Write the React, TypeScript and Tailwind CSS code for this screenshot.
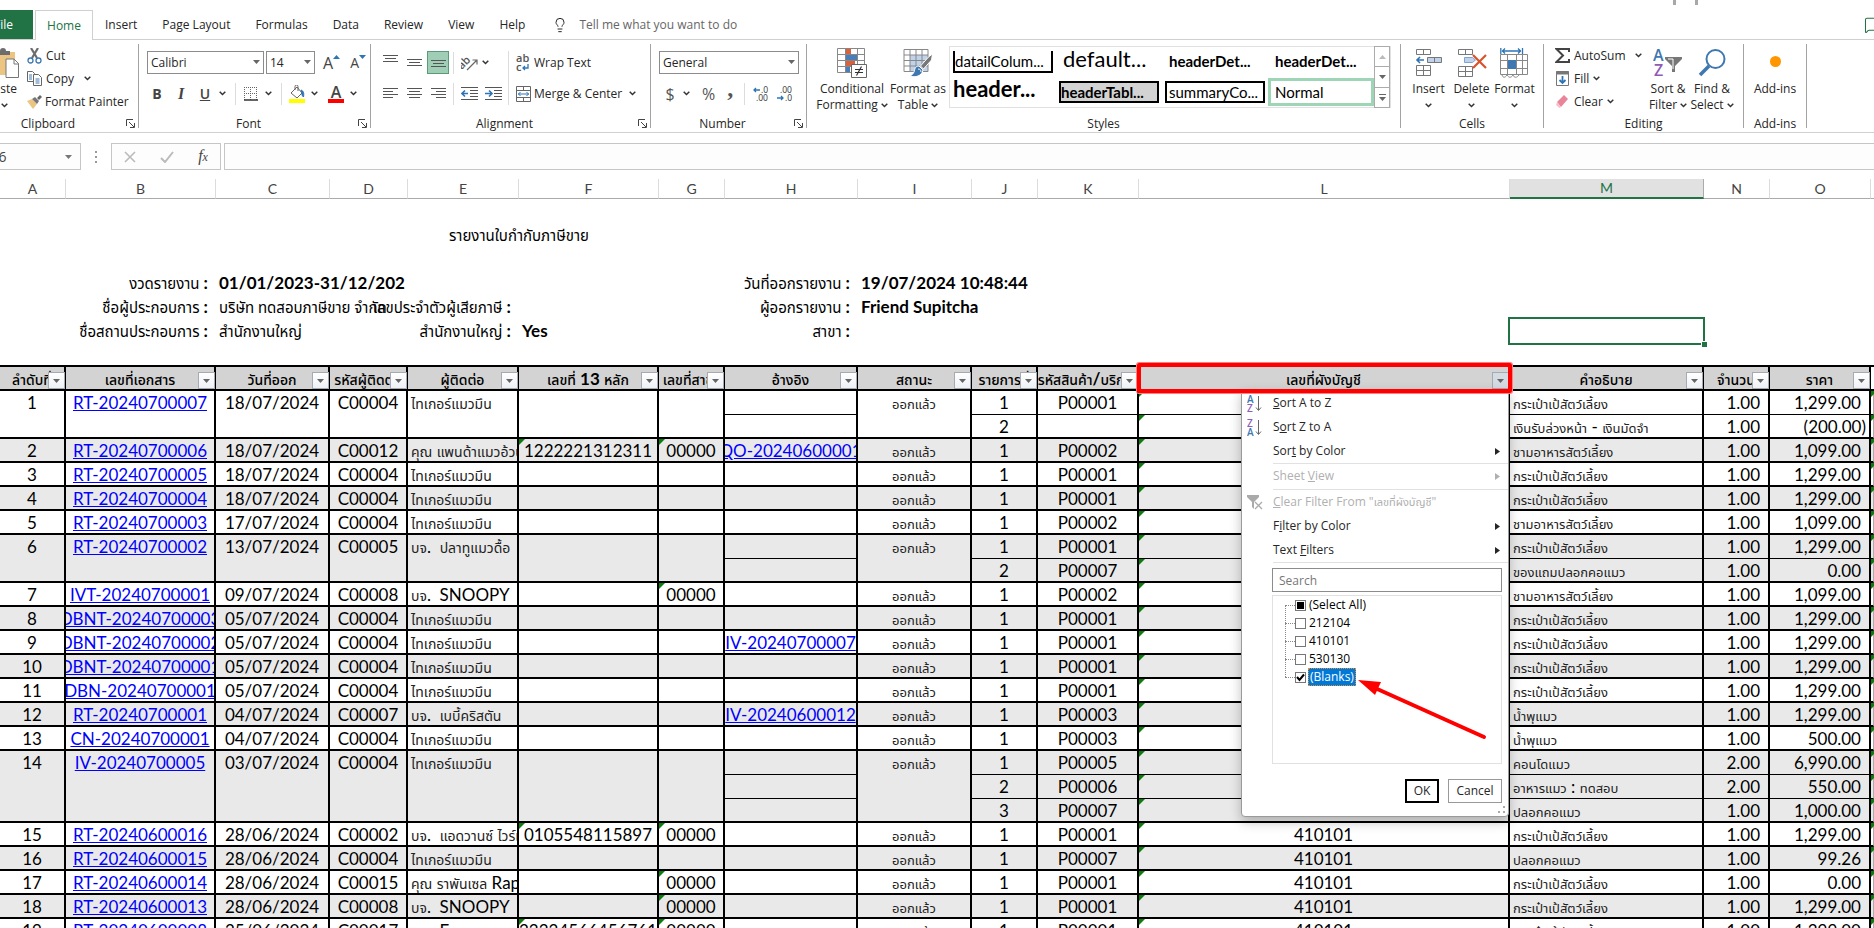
import type { ReactNode } from "react";
import { Lightbulb, MessageSquare } from "lucide-react";
import clsx from "clsx";

type Line = [no: string, product: string, account: string, name: string, qty: string, price: string];

type Doc = {
  no: string;
  doc: string;
  date: string;
  contact: string;
  customer: string;
  taxId?: string;
  branch?: string;
  ref?: string;
  lines: Line[];
};

const BAG = "กระเป๋าเป้สัตว์เลี้ยง";
const BOWL = "ชามอาหารสัตว์เลี้ยง";
const TIGER = "ไทเกอร์แมวมึน";

const docs: Doc[] = [
  {
    no: "1", doc: "RT-20240700007", date: "18/07/2024", contact: "C00004", customer: TIGER,
    lines: [
      ["1", "P00001", "", BAG, "1.00", "1,299.00"],
      ["2", "", "", "เงินรับล่วงหน้า - เงินมัดจำ", "1.00", "(200.00)"],
    ],
  },
  {
    no: "2", doc: "RT-20240700006", date: "18/07/2024", contact: "C00012", customer: "คุณ แพนด้าแมวอ้วน",
    taxId: "1222221312311", branch: "00000", ref: "QO-20240600001",
    lines: [["1", "P00002", "", BOWL, "1.00", "1,099.00"]],
  },
  { no: "3", doc: "RT-20240700005", date: "18/07/2024", contact: "C00004", customer: TIGER, lines: [["1", "P00001", "", BAG, "1.00", "1,299.00"]] },
  { no: "4", doc: "RT-20240700004", date: "18/07/2024", contact: "C00004", customer: TIGER, lines: [["1", "P00001", "", BAG, "1.00", "1,299.00"]] },
  { no: "5", doc: "RT-20240700003", date: "17/07/2024", contact: "C00004", customer: TIGER, lines: [["1", "P00002", "", BOWL, "1.00", "1,099.00"]] },
  {
    no: "6", doc: "RT-20240700002", date: "13/07/2024", contact: "C00005", customer: "บจ.  ปลาทูแมวดื้อ",
    lines: [
      ["1", "P00001", "", BAG, "1.00", "1,299.00"],
      ["2", "P00007", "", "ของแถมปลอกคอแมว", "1.00", "0.00"],
    ],
  },
  { no: "7", doc: "IVT-20240700001", date: "09/07/2024", contact: "C00008", customer: "บจ.  SNOOPY", branch: "00000", lines: [["1", "P00002", "", BOWL, "1.00", "1,099.00"]] },
  { no: "8", doc: "DBNT-20240700003", date: "05/07/2024", contact: "C00004", customer: TIGER, lines: [["1", "P00001", "", BAG, "1.00", "1,299.00"]] },
  { no: "9", doc: "DBNT-20240700002", date: "05/07/2024", contact: "C00004", customer: TIGER, ref: "IV-20240700007", lines: [["1", "P00001", "", BAG, "1.00", "1,299.00"]] },
  { no: "10", doc: "DBNT-20240700001", date: "05/07/2024", contact: "C00004", customer: TIGER, lines: [["1", "P00001", "", BAG, "1.00", "1,299.00"]] },
  { no: "11", doc: "DBN-20240700001", date: "05/07/2024", contact: "C00004", customer: TIGER, lines: [["1", "P00001", "", BAG, "1.00", "1,299.00"]] },
  { no: "12", doc: "RT-20240700001", date: "04/07/2024", contact: "C00007", customer: "บจ.  เบบี้คริสตัน", ref: "IV-20240600012", lines: [["1", "P00003", "", "น้ำพุแมว", "1.00", "1,299.00"]] },
  { no: "13", doc: "CN-20240700001", date: "04/07/2024", contact: "C00004", customer: TIGER, lines: [["1", "P00003", "", "น้ำพุแมว", "1.00", "500.00"]] },
  {
    no: "14", doc: "IV-20240700005", date: "03/07/2024", contact: "C00004", customer: TIGER,
    lines: [
      ["1", "P00005", "", "คอนโดแมว", "2.00", "6,990.00"],
      ["2", "P00006", "", "อาหารแมว : ทดสอบ", "2.00", "550.00"],
      ["3", "P00007", "", "ปลอกคอแมว", "1.00", "1,000.00"],
    ],
  },
  { no: "15", doc: "RT-20240600016", date: "28/06/2024", contact: "C00002", customer: "บจ.  แอดวานซ์ ไวร์เลส", taxId: "0105548115897", branch: "00000", lines: [["1", "P00001", "410101", BAG, "1.00", "1,299.00"]] },
  { no: "16", doc: "RT-20240600015", date: "28/06/2024", contact: "C00004", customer: TIGER, lines: [["1", "P00007", "410101", "ปลอกคอแมว", "1.00", "99.26"]] },
  { no: "17", doc: "RT-20240600014", date: "28/06/2024", contact: "C00015", customer: "คุณ ราพันเซล Rapunzel", branch: "00000", lines: [["1", "P00001", "410101", BAG, "1.00", "0.00"]] },
  { no: "18", doc: "RT-20240600013", date: "28/06/2024", contact: "C00008", customer: "บจ.  SNOOPY", branch: "00000", lines: [["1", "P00001", "410101", BAG, "1.00", "1,299.00"]] },
  { no: "19", doc: "RT-20240600008", date: "25/06/2024", contact: "C00017", customer: "บจ.  Few", taxId: "22224566456761", branch: "00000", lines: [["1", "P00001", "410101", BAG, "1.00", "1,299.00"]] },
];

const columns = [
  { letter: "A", title: "ลำดับที่", width: "w-[66px]" },
  { letter: "B", title: "เลขที่เอกสาร", width: "w-[150px]" },
  { letter: "C", title: "วันที่ออก", width: "w-[114px]" },
  { letter: "D", title: "รหัสผู้ติดต่อ", width: "w-[78px]" },
  { letter: "E", title: "ผู้ติดต่อ", width: "w-[111px]" },
  { letter: "F", title: "เลขที่ 13 หลัก", width: "w-[140px]" },
  { letter: "G", title: "เลขที่สาขา", width: "w-[66px]" },
  { letter: "H", title: "อ้างอิง", width: "w-[133px]" },
  { letter: "I", title: "สถานะ", width: "w-[114px]" },
  { letter: "J", title: "รายการที่", width: "w-[66px]" },
  { letter: "K", title: "รหัสสินค้า/บริการ", width: "w-[101px]" },
  { letter: "L", title: "เลขที่ผังบัญชี", width: "w-[371px]" },
  { letter: "M", title: "คำอธิบาย", width: "w-[194px]" },
  { letter: "N", title: "จำนวน", width: "w-[66px]" },
  { letter: "O", title: "ราคา", width: "w-[101px]" },
];

// Thai glyphs run larger than Latin ones at the same size, so they get their own size.
const mixed = (text: string, thaiClass: string) => (
  <span>
    {text.split(/([\u0E00-\u0E7F]+)/).map((part, i) =>
      i % 2 === 1 ? <span key={i} className={thaiClass}>{part}</span> : part,
    )}
  </span>
);

const Chevron = () => (
  <svg className="h-[5px] w-[7px] shrink-0" viewBox="0 0 7 5" fill="none" stroke="#333" strokeWidth="1.5">
    <path d="M.7.8 3.500 3.500 6.300.8" />
  </svg>
);

const Triangle = ({ className = "" }: { className?: string }) => (
  <svg className={clsx("h-1 w-[7px] shrink-0", className)} viewBox="0 0 7 4" fill="currentColor">
    <path d="M0 0h7L3.5 4z" />
  </svg>
);

const Divider = ({ className = "h-[22px]" }: { className?: string }) => (
  <span className={clsx("w-px shrink-0 bg-[#dcdcdc]", className)} />
);

const Group = ({ label, width, launcher, labelClass, children }: { label: string; width: string; launcher?: boolean; labelClass?: string; children: ReactNode }) => (
  <section className={clsx("flex h-[84px] shrink-0 flex-col border-r border-[#a3a3a3]", width)}>
    <div className="h-[75px]">{children}</div>
    <div className="flex h-[9px] items-center">
      <span className={clsx("flex-1 text-center leading-4", labelClass)}>{label}</span>
      {launcher && (
        <button aria-label={`${label} settings`} className="mr-[3px] w-[9px]">
          <svg viewBox="0 0 9 9" className="h-[9px] w-[9px]" fill="none" stroke="#444">
            <path d="M.5 7V.5H7M3 3l5 5M8.500 4v4.500H4" />
          </svg>
        </button>
      )}
    </div>
  </section>
);

const BigButton = ({ icon, lines, width, chevronBelow, plain }: { icon: ReactNode; lines: string[]; width: string; chevronBelow?: boolean; plain?: boolean }) => (
  <button className={clsx("flex h-[72px] shrink-0 flex-col items-center whitespace-nowrap pt-1 leading-4", width)}>
    <span className="mb-[3px] flex h-[30px] items-center">{icon}</span>
    {lines.map((line, i) => (
      <span key={line} className="flex items-center gap-[3px]">
        {line}
        {!plain && !chevronBelow && i === lines.length - 1 && <Chevron />}
      </span>
    ))}
    {chevronBelow && <span className="flex h-4 items-center"><Chevron /></span>}
  </button>
);

const Combo = ({ label, value, width }: { label: string; value: string; width: string }) => (
  <span className={clsx("relative block h-[23px] shrink-0", width)}>
    <select aria-label={label} defaultValue={value} className="h-full w-full appearance-none border border-[#8c8c8c] bg-white pl-[3px] text-[#262626] outline-none">
      <option>{value}</option>
    </select>
    <Triangle className="pointer-events-none absolute right-1 top-[9px] text-[#666]" />
  </span>
);

const AlignLines = ({ rows }: { rows: [number, number][] }) => (
  <svg className="h-[14px] w-[15px]" viewBox="0 0 15 14" stroke="#555">
    {rows.map(([x, w], i) => (
      <path key={i} d={`M${x} ${i * 3 + 1.5}h${w}`} />
    ))}
  </svg>
);

const IndentIcon = ({ right }: { right?: boolean }) => (
  <svg className="h-[14px] w-[17px]" viewBox="0 0 17 14" fill="none" stroke="#555">
    <path d="M0 .5h17M9 3.500h8M9 6.500h8M9 9.500h8M0 12.500h17" />
    <path d={right ? "M0 6.500h6M4 3.500l3 3-3 3" : "M7 6.500H1M4 3.500l-3 3 3 3"} stroke="#2e75b6" strokeWidth="1.6" />
  </svg>
);

const DecimalIcon = ({ less }: { less?: boolean }) => (
  <svg className="h-4 w-[16px]" viewBox="0 0 16 16" fontSize="8.500" fill="#333">
    <text x={less ? 3 : 8} y="7">{less ? ".00" : ".0"}</text>
    <text x={less ? 8 : 3} y="15">{less ? ".0" : ".00"}</text>
    <path d={less ? "M0 12h6M4 10l2 2-2 2" : "M7 4H1M3 2 1 4l2 2"} fill="none" stroke="#2e75b6" strokeWidth="1.300" />
  </svg>
);

const tabs = ["Insert", "Page Layout", "Formulas", "Data", "Review", "View", "Help"];

const TabBar = () => (
  <nav className="flex h-[30px] items-stretch border-b border-[#d0d0d0] text-[#262626]">
    <button className="flex w-[33px] shrink-0 items-center justify-end overflow-hidden bg-[#217346] pr-5 text-white">File</button>
    <button className="-mb-px ml-[2px] w-[58px] border border-b-0 border-[#d0d0d0] bg-white text-[#217346]">Home</button>
    <div className="flex items-center gap-[25px] pl-3">
      {tabs.map((tab) => (
        <button key={tab} className="whitespace-nowrap">{tab}</button>
      ))}
    </div>
    <label className="ml-[27px] flex items-center gap-[11px]">
      <Lightbulb className="h-4 w-4" strokeWidth={1.5} />
      <input aria-label="Tell me what you want to do" placeholder="Tell me what you want to do" className="w-48 outline-none placeholder:text-[#666]" />
    </label>
    <button aria-label="Comments" className="-mr-2 ml-auto text-[#217346]">
      <MessageSquare className="h-[18px] w-[18px]" strokeWidth={1.4} />
    </button>
  </nav>
);

const ClipboardGroup = () => (
  <Group label="Clipboard" width="w-[139px]" labelClass="pr-[30px]" launcher>
    <div className="flex">
      <button className="flex h-[72px] w-[25px] shrink-0 flex-col items-end overflow-hidden pr-[6px] pt-1 leading-4">
        <svg className="mb-[3px] h-[30px] w-[30px] shrink-0" viewBox="0 0 30 30">
          <path d="M1 4h25v23H1z" fill="#ecc582" />
          <path d="M7 7V3h4a3 3 0 0 1 6 0h4v4z" fill="#6d6d6d" />
          <path d="M17 11h8l4.500 4.500V29.500H17z" fill="#fff" stroke="#777" />
          <path d="M25 11v5h5" fill="none" stroke="#777" />
        </svg>
        <span className="pr-[2px]">Paste</span>
        <span className="flex h-4 w-[18px] items-center"><Chevron /></span>
      </button>
      <div className="flex flex-col pl-[2px] text-[#262626]">
        <button className="flex h-[23px] items-center gap-[4px]">
          <svg className="h-4 w-[15px]" viewBox="0 0 15 16" fill="none">
            <path d="M4 0l6 10M11 0 5 10" stroke="#6d6d6d" strokeWidth="2.200" />
            <circle cx="3.500" cy="12.500" r="2.500" stroke="#3f78b0" strokeWidth="1.300" />
            <circle cx="11.500" cy="12.500" r="2.500" stroke="#3f78b0" strokeWidth="1.300" />
          </svg>
          Cut
        </button>
        <button className="flex h-[23px] items-center gap-[4px]">
          <svg className="h-[15px] w-[15px]" viewBox="0 0 15 15" fill="#fff" stroke="#666">
            <path d="M.5.5h5l2 2v8h-7z" />
            <path d="M6.500 3.500h5l3 3v8h-8z" />
            <path d="M2 4h3M2 6h3M2 8h3M8.500 8h4M8.500 10h4M8.500 12h4" stroke="#3f78b0" />
          </svg>
          Copy
          <span className="ml-[6px]"><Chevron /></span>
        </button>
        <button className="flex h-[23px] items-center gap-[3px] whitespace-nowrap">
          <svg className="h-[14px] w-[15px]" viewBox="0 0 15 14">
            <path d="M0 6l5-2 5 5-4 5z" fill="#ecc582" />
            <path d="M5 4l3-2 4 4-2 3z" fill="#777" />
            <path d="M10 3l3-3 2 2-3 3z" fill="#666" />
          </svg>
          Format Painter
        </button>
      </div>
    </div>
  </Group>
);

const FontGroup = () => (
  <Group label="Font" width="w-[232px]" launcher>
    <div className="flex flex-col gap-2 pl-2 pt-[7px] text-[#444]">
      <div className="flex h-[23px] items-center gap-[2px]">
        <Combo label="Font" value="Calibri" width="w-[117px]" />
        <Combo label="Font size" value="14" width="w-[49px]" />
        <button aria-label="Increase font size" className="ml-[6px] flex text-base">
          A<Triangle className="mt-1 w-[5px] rotate-180 text-[#2e75b6]" />
        </button>
        <button aria-label="Decrease font size" className="ml-2 flex text-sm">
          A<Triangle className="mt-[2px] w-[5px] text-[#2e75b6]" />
        </button>
      </div>
      <div className="flex h-[23px] items-center pl-[4px]">
        <button className="w-[12px] text-sm font-bold">B</button>
        <button className="ml-3 w-[12px] font-['Liberation_Serif',serif] text-base font-bold italic">I</button>
        <button className="ml-3 w-[12px] text-sm font-semibold underline">U</button>
        <button aria-label="Underline styles" className="ml-2"><Chevron /></button>
        <Divider className="ml-[9px] h-[22px]" />
        <button aria-label="Borders" className="ml-2">
          <svg className="h-[14px] w-[14px]" viewBox="0 0 14 14" fill="none" stroke="#666">
            <path d="M.5 0v13M6.500 0v13M12.500 0v13M0 .5h13M0 6.500h13" strokeDasharray="1 1" />
            <path d="M0 13h14" stroke="#333" strokeWidth="1.500" />
          </svg>
        </button>
        <button aria-label="Border styles" className="ml-[7px]"><Chevron /></button>
        <Divider className="ml-[9px] h-[22px]" />
        <button aria-label="Fill color" className="ml-[7px]">
          <svg className="h-[18px] w-[16px]" viewBox="0 0 16 18">
            <path d="M2 8l6-6 5 6-5 5zM6 5V1.500a1.500 1.500 0 0 1 3 0V6" fill="#fff" stroke="#666" />
            <path d="M12 5c3 1 3 4 2.500 7-1-1-2-2-1.500-4z" fill="#2e75b6" stroke="#2e75b6" />
            <path d="M0 14h16v4H0z" fill="#ff0" />
          </svg>
        </button>
        <button aria-label="Fill colors" className="ml-[6px]"><Chevron /></button>
        <button aria-label="Font color" className="ml-[10px] flex h-[18px] w-4 flex-col items-center border-b-4 border-[#f00] text-base font-semibold leading-[14px]">A</button>
        <button aria-label="Font colors" className="ml-[6px]"><Chevron /></button>
      </div>
    </div>
  </Group>
);

const AlignmentGroup = () => (
  <Group label="Alignment" width="w-[280px]" launcher>
    <div className="flex pl-3 pt-[7px]">
      <div className="flex flex-col gap-2">
        <div className="flex h-[23px] items-center">
          <button aria-label="Top align" className="w-6 pb-1"><AlignLines rows={[[0, 15], [2, 11], [0, 15]]} /></button>
          <button aria-label="Middle align" className="w-[20px] pt-1"><AlignLines rows={[[0, 15], [2, 11], [0, 15]]} /></button>
          <button aria-label="Bottom align" className="flex h-[23px] w-[22px] items-end justify-center border border-[#5a9c76] bg-[#9fcdb5]">
            <AlignLines rows={[[0, 15], [2, 11], [0, 15]]} />
          </button>
          <Divider className="ml-1 h-[22px]" />
          <button aria-label="Orientation" className="ml-[7px]">
            <svg className="h-[17px] w-[17px]" viewBox="0 0 17 17" fill="#555">
              <text x="-3" y="11" fontSize="11" fontWeight="600" transform="rotate(-45 5 9)">ab</text>
              <path d="M6 16 16 6M11.500 6H16v4.500" fill="none" stroke="#666" strokeWidth="1.200" />
            </svg>
          </button>
          <button aria-label="Orientation options" className="ml-[4px]"><Chevron /></button>
        </div>
        <div className="flex h-[23px] items-center">
          <button aria-label="Align left" className="w-6"><AlignLines rows={[[0, 15], [0, 10], [0, 15], [0, 10]]} /></button>
          <button aria-label="Center" className="w-6"><AlignLines rows={[[0, 15], [2, 11], [0, 15], [2, 11]]} /></button>
          <button aria-label="Align right" className="w-[22px]"><AlignLines rows={[[0, 15], [5, 10], [0, 15], [5, 10]]} /></button>
          <Divider className="h-[22px]" />
          <button aria-label="Decrease indent" className="ml-[7px]"><IndentIcon /></button>
          <button aria-label="Increase indent" className="ml-[7px]"><IndentIcon right /></button>
        </div>
      </div>
      <Divider className="ml-[6px] h-[54px]" />
      <div className="ml-[7px] flex flex-col gap-2">
        <button className="flex h-[23px] items-center gap-[3px] whitespace-nowrap">
          <svg className="h-[17px] w-[15px]" viewBox="0 0 15 17" fill="#555" fontSize="11" fontWeight="600">
            <text x="0" y="8">ab</text>
            <text x="0" y="17">c</text>
            <path d="M12 10v4H7M9 12l-2 2 2 2" fill="none" stroke="#2e75b6" strokeWidth="1.300" />
          </svg>
          Wrap Text
        </button>
        <button className="flex h-[23px] items-center gap-[3px] whitespace-nowrap">
          <svg className="h-[16px] w-[15px]" viewBox="0 0 15 16" fill="none" stroke="#666">
            <path d="M.5.5h14v15H.5zM.5 4.500h14M.5 11.500h14M7.500.5v4M7.500 11.500v4" />
            <path d="M2 8h11M4.500 6l-2 2 2 2M10.500 6l2 2-2 2" stroke="#2e75b6" />
          </svg>
          Merge &amp; Center
          <span className="ml-1"><Chevron /></span>
        </button>
      </div>
    </div>
  </Group>
);

const NumberGroup = () => (
  <Group label="Number" width="w-[156px]" launcher>
    <div className="flex flex-col gap-2 pl-2 pt-[7px] text-[#555]">
      <Combo label="Number format" value="General" width="w-[140px]" />
      <div className="flex h-[23px] items-center pl-[6px]">
        <button className="w-[10px] text-base">$</button>
        <button aria-label="Accounting formats" className="ml-2"><Chevron /></button>
        <button className="ml-3 text-base">%</button>
        <button className="ml-3 pb-3 font-['Liberation_Serif',serif] text-2xl font-bold leading-3">,</button>
        <Divider className="ml-[11px] h-[22px]" />
        <button aria-label="Increase decimal" className="ml-2"><DecimalIcon /></button>
        <button aria-label="Decrease decimal" className="ml-2"><DecimalIcon less /></button>
      </div>
    </div>
  </Group>
);

const CondIcon = () => (
  <svg className="h-[30px] w-[30px]" viewBox="0 0 30 30">
    <path d="M.5.5h27v24H.5z" fill="#fff" />
    <path d="M9 1h5v5H9zM9 12h9v6H9z" fill="#d9623b" />
    <path d="M9 6h11v6H9zM9 18h4v6H9z" fill="#4a7ebb" />
    <path d="M.5.5h27v24H.5zM.5 6.500h27M.5 12.500h27M.5 18.500h27M8.500.5v24M20.500.5v24" fill="none" stroke="#888" />
    <path d="M14.500 16.500h15v13h-15z" fill="#fff" stroke="#666" />
    <path d="M18 21.500h8M18 24.500h8M24.500 18.500l-5 9" fill="none" stroke="#333" strokeWidth="1.200" />
  </svg>
);

const TableIcon = () => (
  <svg className="h-[28px] w-[30px]" viewBox="0 0 30 28">
    <path d="M1 .5h24v22H1z" fill="#fff" />
    <path d="M7 6h18v16H7z" fill="#c0d3ea" />
    <path d="M1 .5h24v22H1zM1 6h24M1 11.500h24M1 17h24M7 .5v22M13 .5v22M19 .5v22" fill="none" stroke="#888" />
    <path d="M29.500 5l-1 6-8 9-3-3 8-9z" fill="#777" stroke="#fff" />
    <path d="M16 17c-4 0-4 3-5 6-1 2-2 3-4 4 5 2 12 0 13-6z" fill="#3f78b0" stroke="#fff" />
    <path d="M15 20c2 0 3 1 3 3" fill="none" stroke="#fff" />
  </svg>
);

const StylesGroup = () => (
  <Group label="Styles" width="w-[594px]">
    <div className="flex pl-2">
      <BigButton icon={<CondIcon />} lines={["Conditional", "Formatting"]} width="w-[74px]" />
      <BigButton icon={<TableIcon />} lines={["Format as", "Table"]} width="w-[58px]" />
      <div className="ml-[2px] mt-[2px] flex h-[62px] border border-[#e1e1e1] font-['Lato',sans-serif] text-[15px] text-black">
        <div className="grid w-[424px] grid-cols-4 grid-rows-2 items-center whitespace-nowrap">
          <button className="mx-[3px] h-[22px] overflow-hidden border-2 border-t-0 border-black text-left leading-5">datailColum...</button>
          <button className="mx-[3px] self-start pl-1 text-left text-[22px] leading-6">default...</button>
          <button className="mx-[3px] pl-1 text-left font-bold">headerDet...</button>
          <button className="mx-[3px] pl-1 text-left font-bold">headerDet...</button>
          <button className="mx-[3px] self-start text-left text-[22px] font-bold leading-6">header...</button>
          <button className="mx-[3px] h-[22px] overflow-hidden border-2 border-black bg-[#d3d3d3] text-left font-bold leading-4">headerTabl...</button>
          <button className="mx-[3px] h-[22px] overflow-hidden border-2 border-black pl-[2px] text-left leading-4">summaryCo...</button>
          <button className="h-7 border-3 border-[#9fd5b7] pl-1 text-left leading-5">Normal</button>
        </div>
        <div className="-my-px flex w-[16px] flex-col border border-[#ababab] text-[#666]">
          <button aria-label="Previous styles" className="flex flex-1 items-center justify-center text-[#bbb]"><Triangle className="rotate-180" /></button>
          <button aria-label="Next styles" className="flex flex-1 items-center justify-center border-y border-[#ababab]"><Triangle /></button>
          <button aria-label="More styles" className="flex flex-1 flex-col items-center justify-center gap-[2px]">
            <span className="h-px w-[7px] bg-[#666]" />
            <Triangle />
          </button>
        </div>
      </div>
    </div>
  </Group>
);

const InsertIcon = () => (
  <svg className="h-[28px] w-[27px]" viewBox="0 0 27 28" fill="none" stroke="#777">
    <path d="M1.500.5h14v5h-14zM8.500.5v5M1.500 16.500h14v10h-14zM8.500 16.500v10M1.500 21.500h14" />
    <path d="M12.500 8.500h14v5h-14zM19.500 8.500v5" fill="#c0d3ea" />
    <path d="M9 11H2.500M5 8l-3 3 3 3" stroke="#2e75b6" strokeWidth="1.600" />
  </svg>
);

const DeleteIcon = () => (
  <svg className="h-[28px] w-[30px]" viewBox="0 0 30 28" fill="none" stroke="#777">
    <path d="M1.500.5h14v5h-14zM8.500.5v5M1.500 17.500h14v10h-14zM8.500 17.500v10M1.500 22.500h14" />
    <path d="M7.500 8.500h8l3 2.500-3 2.500h-8z" fill="#c0d3ea" stroke="#7fa3d0" />
    <path d="M16 6l13 13M29 6 16 19" stroke="#d9532c" strokeWidth="2.200" />
  </svg>
);

const FormatIcon = () => (
  <svg className="h-[30px] w-[29px]" viewBox="0 0 29 30" fill="none" stroke="#888">
    <path d="M.5 6.500h27v20H.5zM.5 12.500h27M.5 20.500h27M7.500 6.500v20M16.500 6.500v20M22.500 6.500v20" />
    <path d="M8 12h8v9H8z" fill="#3f78b0" stroke="none" />
    <path d="M2 27c1 3 3 3 5 0 2 3 4 3 6 0 1 3 4 3 6 0" fill="#fff" />
    <path d="M.8 0v6M22.500 0v6M2 3h19M5 .5 2.500 3 5 5.500M18 .5 20.500 3 18 5.500" stroke="#2e75b6" strokeWidth="1.300" />
  </svg>
);

const CellsGroup = () => (
  <Group label="Cells" width="w-[143px]">
    <div className="flex pl-[6px]">
      <BigButton icon={<InsertIcon />} lines={["Insert"]} width="w-[43px]" chevronBelow />
      <BigButton icon={<DeleteIcon />} lines={["Delete"]} width="w-[43px]" chevronBelow />
      <BigButton icon={<FormatIcon />} lines={["Format"]} width="w-[43px]" chevronBelow />
    </div>
  </Group>
);

const EditingGroup = () => (
  <Group label="Editing" width="w-[200px]">
    <div className="flex pl-[11px]">
      <div className="flex w-[91px] shrink-0 flex-col">
        <button className="flex h-[23px] items-center gap-1">
          <svg className="h-[15px] w-[15px]" viewBox="0 0 15 15" fill="none" stroke="#444" strokeWidth="2">
            <path d="M14 4V1H1.500l6.500 6.500L1.500 14H14v-3" />
          </svg>
          AutoSum
          <span className="ml-[5px]"><Chevron /></span>
        </button>
        <button className="flex h-[23px] items-center gap-1">
          <svg className="h-[15px] w-[15px]" viewBox="0 0 15 15" fill="none" stroke="#777">
            <path d="M1.500.5h12v14h-12z" fill="#fff" />
            <path d="M1 2h13" strokeWidth="3" />
            <path d="M7.500 5v7M4.500 9l3 3 3-3" stroke="#2e75b6" strokeWidth="1.800" />
          </svg>
          Fill <Chevron />
        </button>
        <button className="flex h-[23px] items-center gap-1">
          <svg className="h-[13px] w-[15px]" viewBox="0 0 15 13">
            <path d="M2 7 9 0l4 4-7 8z" fill="#ea8499" />
            <path d="M2 7l4 5-1.500 1L1 10z" fill="#f5c2cc" />
          </svg>
          Clear <Chevron />
        </button>
      </div>
      <BigButton
        width="w-[44px]"
        lines={["Sort &", "Filter"]}
        icon={
          <svg className="h-[28px] w-[30px]" viewBox="0 0 30 28" fontSize="16" fontWeight="600">
            <text x="0" y="12" fill="#3f78b0">A</text>
            <text x="1" y="27" fill="#8e5bb5">Z</text>
            <path d="M12 8h17v2l-7 7v6h-3v-6l-7-7z" fill="#777" />
            <path d="M15 10h5v10" fill="none" stroke="#fff" />
          </svg>
        }
      />
      <BigButton
        width="w-[44px]"
        lines={["Find &", "Select"]}
        icon={
          <svg className="h-[28px] w-[28px]" viewBox="0 0 28 28" fill="none" stroke="#3f78b0">
            <circle cx="17.500" cy="10" r="9" strokeWidth="2" />
            <path d="M11 17 2 26" strokeWidth="3.500" />
          </svg>
        }
      />
    </div>
  </Group>
);

const Ribbon = () => (
  <div className="flex h-[93px] items-start border-b border-[#d0d0d0] pt-1 text-[#262626]">
    <ClipboardGroup />
    <FontGroup />
    <AlignmentGroup />
    <NumberGroup />
    <StylesGroup />
    <CellsGroup />
    <EditingGroup />
    <Group label="Add-ins" width="w-[63px]">
      <BigButton
        plain
        width="w-[62px]"
        lines={["Add-ins"]}
        icon={<span className="mb-1 h-[11px] w-[11px] rounded-full bg-[#ff9500]" />}
      />
    </Group>
  </div>
);

const FormulaBar = () => (
  <div className="mt-[10px] flex h-[27px] items-stretch text-sm">
    <div className="flex w-[81px] items-center justify-between overflow-hidden border border-l-0 border-[#c6c6c6] bg-[#fdfdfd] pr-2 text-[#444]">
      <input aria-label="Name box" defaultValue="M6" className="-ml-[14px] w-8 outline-none" />
      <Triangle className="text-[#777]" />
    </div>
    <div className="flex w-[30px] flex-col items-center justify-center gap-[3px]">
      <span className="h-[2px] w-[2px] bg-[#999]" />
      <span className="h-[2px] w-[2px] bg-[#999]" />
      <span className="h-[2px] w-[2px] bg-[#999]" />
    </div>
    <div className="flex w-[110px] items-center justify-around border border-[#c6c6c6] bg-[#fdfdfd]">
      <button aria-label="Cancel entry">
        <svg className="h-3 w-3" viewBox="0 0 12 12" stroke="#bbb" strokeWidth="1.600"><path d="M1 1l10 10M11 1 1 11" /></svg>
      </button>
      <button aria-label="Confirm entry">
        <svg className="h-3 w-[14px]" viewBox="0 0 14 12" fill="none" stroke="#bbb" strokeWidth="2"><path d="M1 7l4 4 8-10" /></svg>
      </button>
      <button className="font-['Liberation_Serif',serif] text-base italic leading-4 text-[#444]">f<span className="text-xs">x</span></button>
    </div>
    <input aria-label="Formula bar" className="ml-[3px] flex-1 border border-r-0 border-[#c6c6c6] bg-[#fdfdfd] outline-none" />
  </div>
);

const MenuItem = ({ children, icon, arrow, muted }: { children: ReactNode; icon?: ReactNode; arrow?: boolean; muted?: boolean }) => (
  <button className={clsx("flex h-6 w-full items-center pr-2 text-left", muted ? "text-[#b0b0b0]" : "text-[#262626]")}>
    <span className="flex w-[31px] shrink-0 items-center pl-[5px]">{icon}</span>
    <span className="flex-1 whitespace-nowrap">{children}</span>
    {arrow && (
      <svg className="h-[7px] w-[5px]" viewBox="0 0 5 7" fill="currentColor"><path d="M0 0v7l5-3.500z" /></svg>
    )}
  </button>
);

const SortIcon = ({ top, bottom }: { top: string; bottom: string }) => (
  <svg className="h-[17px] w-[15px]" viewBox="0 0 15 17" fontSize="10" fontWeight="600">
    <text x="0" y="8" fill={top === "A" ? "#3f78b0" : "#8e5bb5"}>{top}</text>
    <text x="0" y="17" fill={bottom === "A" ? "#3f78b0" : "#8e5bb5"}>{bottom}</text>
    <path d="M11.500 1v14M9 12.500l2.500 3 2.500-3" fill="none" stroke="#666" />
  </svg>
);

const filterValues = [
  { label: "(Select All)", state: "mixed" },
  { label: "212104", state: "off" },
  { label: "410101", state: "off" },
  { label: "530130", state: "off" },
  { label: "(Blanks)", state: "on" },
];

const FilterMenu = () => (
  <div className="absolute top-[22px] -right-px z-10 w-[268px] rounded-b-[4px] border border-[#9a9a9a] bg-white pt-px pb-[13px] text-left font-['Open_Sans','Noto_Sans_Thai',sans-serif] text-xs font-normal shadow-[0_5px_12px_rgba(0,0,0,0.25)]">
    <MenuItem icon={<SortIcon top="A" bottom="Z" />}><u>S</u>ort A to Z</MenuItem>
    <MenuItem icon={<SortIcon top="Z" bottom="A" />}>S<u>o</u>rt Z to A</MenuItem>
    <MenuItem arrow>Sor<u>t</u> by Color</MenuItem>
    <hr className="ml-[31px] border-[#e1e1e1]" />
    <MenuItem arrow muted>Sheet <u>V</u>iew</MenuItem>
    <hr className="mt-px ml-[31px] border-[#e1e1e1]" />
    <MenuItem
      muted
      icon={
        <svg className="h-[15px] w-4" viewBox="0 0 16 15">
          <path d="M0 0h12v2L7 7v7L5 12V7L0 2z" fill="#aaa" />
          <path d="M8 7l7 7M15 7l-7 7" stroke="#aaa" strokeWidth="1.300" />
        </svg>
      }
    >
      <u>C</u>lear Filter From "<span className="text-[11px]">เลขที่ผังบัญชี</span>"
    </MenuItem>
    <MenuItem arrow>F<u>i</u>lter by Color</MenuItem>
    <MenuItem arrow>Text <u>F</u>ilters</MenuItem>
    <hr className="ml-[31px] border-[#e1e1e1]" />
    <div className="pl-[30px] pr-[6px]">
      <input aria-label="Search" placeholder="Search" className="mt-[5px] block h-6 w-full border border-[#8c8c8c] px-[6px] outline-none placeholder:text-[#777]" />
      <div className="mt-[3px] h-[169px] border border-[#e1e1e1] pl-3">
        <ul className="relative">
          <li aria-hidden className="absolute left-0 top-[9px] h-[72px] border-l border-dotted border-[#888]" />
          {filterValues.map(({ label, state }) => (
            <li key={label} className="flex h-[18px] items-center">
              <span className="w-[10px] border-t border-dotted border-[#888]" />
              <label className="flex items-center">
                <input type="checkbox" defaultChecked={state === "on"} className="sr-only" />
                <span className="flex h-[11px] w-[11px] items-center justify-center border border-[#777] bg-white">
                  {state === "mixed" && <span className="h-[7px] w-[7px] bg-black" />}
                  {state === "on" && (
                    <svg className="h-[9px] w-[9px]" viewBox="0 0 9 9" fill="none" stroke="#000" strokeWidth="2"><path d="M1 4l2.500 3L8 1.500" /></svg>
                  )}
                </span>
                <span className={clsx("ml-[2px] px-px leading-4 whitespace-nowrap", state === "on" ? "border border-dotted border-[#f08a24] bg-[#0078d7] text-white" : "text-black")}>{label}</span>
              </label>
            </li>
          ))}
        </ul>
      </div>
      <div className="mt-[15px] flex justify-end gap-[9px] text-[#262626]">
        <button className="h-6 w-[34px] border-2 border-black">OK</button>
        <button className="h-6 w-[54px] border border-[#999]">Cancel</button>
      </div>
    </div>
    <svg className="absolute bottom-[3px] right-[3px] h-[7px] w-[7px]" viewBox="0 0 7 7" fill="#aaa">
      <path d="M5 0h2v2H5zM5 5h2v2H5zM0 5h2v2H0z" />
    </svg>
    <svg className="absolute right-[19px] top-[287px] h-[64px] w-[134px]" viewBox="0 0 134 64" fill="#f00">
      <path d="M3 3 26 5 20 18z" />
      <path d="M20 11 129 60" stroke="#f00" strokeWidth="4" strokeLinecap="round" />
    </svg>
  </div>
);

const Mark = () => <span className="absolute left-0 top-0 h-[6px] w-[6px] bg-[#0a7d0a] [clip-path:polygon(0_0,100%_0,0_100%)]" />;

const Cell = ({ children, span = 1, last = true, align = "center", thaiClass = "text-[13px] text-[#222]", mark }: { children?: ReactNode; span?: number; last?: boolean; align?: "center" | "left" | "right"; thaiClass?: string; mark?: boolean }) => (
  <td rowSpan={span} className={clsx("relative border-r-2 border-black p-0 align-top", last ? "border-b-2" : "border-b")}>
    {mark && <Mark />}
    <div
      className={clsx(
        "flex h-[22px] overflow-hidden whitespace-pre leading-6",
        align === "center" && "justify-center",
        align === "left" && "pl-[3px]",
        align === "right" && "justify-end pr-2",
      )}
    >
      {typeof children === "string" ? mixed(children, thaiClass) : children}
    </div>
  </td>
);

const DocRows = ({ row, shaded }: { row: Doc; shaded: boolean }) => (
  <>
    {row.lines.map(([no, product, account, name, qty, price], i) => {
      const span = row.lines.length;
      const last = i === span - 1;
      const negative = price.startsWith("(");
      return (
        <tr key={no} className={clsx("h-6", shaded ? "bg-[#e9e9e9]" : "bg-white")}>
          {i === 0 && (
            <>
              <Cell span={span}>{row.no}</Cell>
              <Cell span={span}><a href="#" className="text-[#00f] underline">{row.doc}</a></Cell>
              <Cell span={span}>{row.date}</Cell>
              <Cell span={span}>{row.contact}</Cell>
              <Cell span={span} align="left" thaiClass="text-sm text-[#222]">{row.customer}</Cell>
              <Cell span={span} mark={!!row.taxId}>{row.taxId}</Cell>
              <Cell span={span} mark={!!row.branch}>{row.branch}</Cell>
            </>
          )}
          <Cell last={last}>{row.ref && <a href="#" className="text-[#00f] underline">{row.ref}</a>}</Cell>
          {i === 0 && <Cell span={span}>ออกแล้ว</Cell>}
          <Cell last={last}>{no}</Cell>
          <Cell last={last}>{product}</Cell>
          <Cell last={last} mark>{account}</Cell>
          <Cell last={last} align="left">{name}</Cell>
          <Cell last={last} align="right">{qty}</Cell>
          <Cell last={last} align="right">{negative ? <span className="-mr-[5px]">{price}</span> : price}</Cell>
          <td className={clsx("relative border-r border-[#ababab] p-0", last ? "border-b-2 border-b-black" : "border-b border-b-black")}><Mark /></td>
        </tr>
      );
    })}
  </>
);

const Label = ({ children }: { children: ReactNode }) => (
  <td className="p-0">
    <div className="flex h-6 items-baseline justify-end whitespace-pre pr-2 font-bold leading-6"><span className="text-[15px] font-normal">{children}</span> :</div>
  </td>
);

const Value = ({ children, span = 1, clip, thai }: { children?: ReactNode; span?: number; clip?: boolean; thai?: boolean }) => (
  <td colSpan={span} className="p-0">
    <div className={clsx("flex h-6 items-baseline whitespace-nowrap pl-[3px] leading-6", clip && "overflow-hidden", thai ? "text-[15px]" : "font-bold")}>{children}</div>
  </td>
);

const Sheet = () => (
  <table className="mt-[9px] w-full table-fixed border-separate border-spacing-0 font-['Lato','Noto_Sans_Thai','Loma',sans-serif] text-[17px] leading-[22px] text-black">
    <colgroup>
      {columns.map((c) => (
        <col key={c.letter} className={c.width} />
      ))}
      <col />
    </colgroup>
    <thead>
      <tr className="h-5 text-sm text-[#444]">
        {columns.map((c) => (
          <th
            key={c.letter}
            className={clsx(
              "h-5 border-r border-b p-0 font-normal leading-[18px]",
              c.letter === "M" ? "border-r-[#ababab] border-b-2 border-b-[#217346] bg-[#e1e1e1] text-[#217346]" : "border-r-[#dcdcdc] border-b-[#ababab]",
            )}
          >
            {c.letter}
          </th>
        ))}
        <th className="border-b border-[#ababab] p-0" />
      </tr>
    </thead>
    <tbody>
      <tr className="h-6"><td colSpan={16} /></tr>
      <tr className="h-6">
        <td colSpan={10} className="p-0 text-center text-[15px]">รายงานใบกำกับภาษีขาย</td>
        <td colSpan={6} />
      </tr>
      <tr className="h-6"><td colSpan={16} /></tr>
      <tr className="h-6">
        <td />
        <Label>งวดรายงาน</Label>
        <Value span={2} clip>01/01/2023-31/12/202</Value>
        <td colSpan={3} />
        <Label>วันที่ออกรายงาน</Label>
        <Value>19/07/2024 10:48:44</Value>
        <td colSpan={7} />
      </tr>
      <tr className="h-6">
        <td />
        <Label>ชื่อผู้ประกอบการ</Label>
        <Value span={2} thai>บริษัท ทดสอบภาษีขาย จำกัด</Value>
        <Label>เลขประจำตัวผู้เสียภาษี</Label>
        <td colSpan={2} />
        <Label>ผู้ออกรายงาน</Label>
        <Value>Friend Supitcha</Value>
        <td colSpan={7} />
      </tr>
      <tr className="h-6">
        <td />
        <Label>ชื่อสถานประกอบการ</Label>
        <Value span={2} thai>สำนักงานใหญ่</Value>
        <Label>สำนักงานใหญ่</Label>
        <Value span={2}>Yes</Value>
        <Label>สาขา</Label>
        <td colSpan={4} />
        <td className="relative p-0">
          <span className="absolute -top-[2px] -right-px -bottom-[2px] -left-[2px] border-2 border-[#217346]" />
          <span className="absolute -right-[3px] -bottom-[4px] h-[6px] w-[6px] border-t border-l border-white bg-[#217346]" />
        </td>
        <td colSpan={3} />
      </tr>
      <tr className="h-6"><td colSpan={16} className="border-b-2 border-black p-0" /></tr>
      <tr className="h-6 bg-[#d3d3d3]">
        {columns.map((c) => (
          <th key={c.letter} className="relative border-r-2 border-b-2 border-black p-0 font-bold">
            <div className="flex h-[22px] justify-center overflow-hidden whitespace-pre leading-6">{mixed(c.title, "text-sm font-medium")}</div>
            <button
              aria-label={`Filter ${c.title}`}
              className={clsx(
                "absolute -right-px bottom-0 flex h-[17px] w-[17px] items-center justify-center border border-[#a6abb3]",
                c.letter === "L" ? "bg-[#d5dbe3]" : "bg-linear-to-b from-white to-[#eef1f5]",
              )}
            >
              <Triangle className="text-[#666]" />
            </button>
            {c.letter === "L" && (
              <>
                <FilterMenu />
                <span className="pointer-events-none absolute -top-[4px] -right-[4px] -bottom-[4px] -left-[2px] z-20 rounded-[2px] border-4 border-[#f00] shadow-[0_0_0_1px_#ff8080]" />
              </>
            )}
          </th>
        ))}
        <th className="border-b-2 border-black bg-white p-0" />
      </tr>
      {docs.map((row, i) => (
        <DocRows key={row.no} row={row} shaded={i % 2 === 1} />
      ))}
    </tbody>
  </table>
);

const App = () => {
  return (
    <main className="h-screen overflow-hidden bg-white font-['Open_Sans','Noto_Sans_Thai',sans-serif] text-xs">
      <header className="h-[10px]">
        <div className="flex justify-end gap-[19px] pr-[176px]">
          <span className="h-[5px] w-[3px] bg-[#a8a8a8]" />
          <span className="h-[5px] w-[3px] bg-[#a8a8a8]" />
        </div>
      </header>
      <TabBar />
      <Ribbon />
      <FormulaBar />
      <Sheet />
    </main>
  );
};

export default App;
